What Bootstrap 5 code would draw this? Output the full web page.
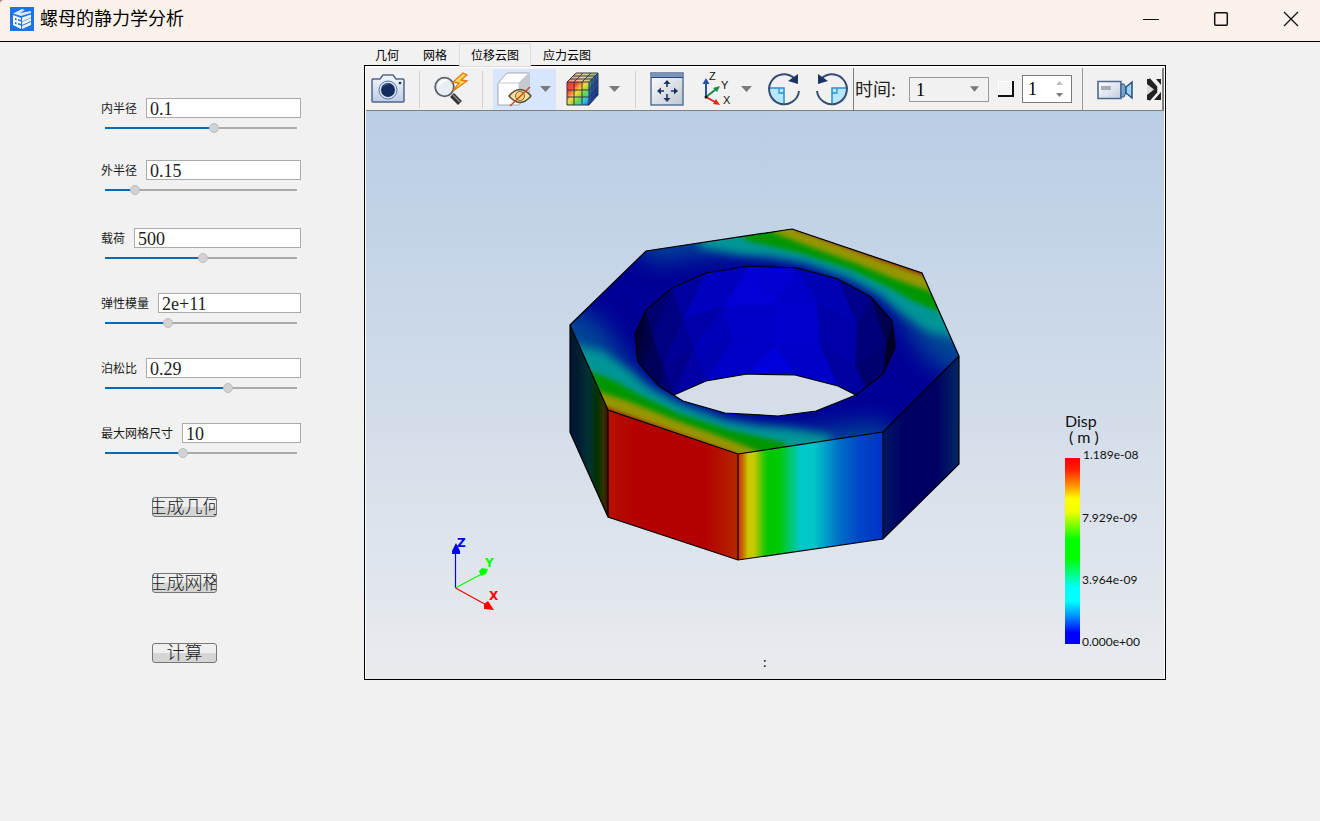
<!DOCTYPE html>
<html lang="zh-CN">
<head>
<meta charset="utf-8">
<meta name="viewport" content="width=device-width, initial-scale=1">
<title>螺母的静力学分析</title>
<link href="https://cdn.jsdelivr.net/npm/bootstrap@5.3.0/dist/css/bootstrap.min.css" rel="stylesheet">
<style>
body{background:#f1f1f1;color:#000;font-family:"Liberation Sans","Noto Sans CJK SC",sans-serif;font-size:12px;line-height:16px}
.title-wrap{background:#8f7f78}
.title-bar{background:#faf1eb;border-bottom:1px solid #000;border-top-left-radius:4px;height:42px;padding:0 10px 4px}
.title-bar h1{font-size:18px;line-height:24px;margin-left:6px}
.win-btn{width:18px;height:18px;line-height:0}
.win-gap{gap:52px;padding-right:10px}
.plain-btn{background:none;border:0;padding:0;display:flex;align-items:center;justify-content:center}
.side{flex:0 0 364px;padding:56px 63px 0 101px}
.field{margin-bottom:27px;height:38px}
.field-near{margin-bottom:24px}
.field-far{margin-bottom:30px}
.field-row{gap:9px;height:20px}
.field-row label{white-space:nowrap;color:#1a1a1a;padding-top:2px}
.field-row input{height:20px;border:1px solid #ababab;border-radius:0;padding:2px 3px 0;font:18px/18px "Liberation Serif",serif;min-width:0;color:#222}
.slide{appearance:none;-webkit-appearance:none;display:block;width:192px;height:12px;margin:4px 4px 0;background:linear-gradient(to right,#0a68b8 var(--v),#ababab var(--v)) center/100% 2px no-repeat}
.slide::-webkit-slider-thumb{-webkit-appearance:none;width:10px;height:10px;border-radius:50%;background:#d2d2d2;border:1px solid #bdbdbd}
.actions{padding:9px 0 0 51px}
.act{width:65px;height:20px;border:1px solid #777;border-radius:3px;background:linear-gradient(#efefef 50%,#d5d5d5 50%);padding:0;overflow:hidden;white-space:nowrap;display:flex;justify-content:center;align-items:center;font:300 18px/18px "Liberation Serif","Noto Sans CJK SC",serif;color:#222}
.act-far{margin-bottom:56px}
.act-near{margin-bottom:50px}
.stage{min-width:0;padding-right:154px}
.tab-row{height:24px;padding-top:1px;position:relative;z-index:1}
.tab-row .nav-link{color:#000;padding:5px 12px 3px;height:24px;border:0;border-radius:0;line-height:16px}
.tab-row .nav-link:first-child{padding-left:11px}
.tab-row .nav-link.active{background:#f1f1f1;color:#000;box-shadow:inset 0 0 0 1px #dedede}
.viewer{border:1px solid #000;background:#fff;padding:0 1px 0 1px;margin-top:-1px}
.tools{height:45px;background:#f1f1f1;border-bottom:1px solid #808080;border-top:2px solid #fafafa;padding-left:4px;overflow:hidden}
.tool{width:36px;height:40px;flex:none}
.tool-menu{width:63px;height:40px;flex:none;padding-left:3px;justify-content:flex-start}
.tool-on{background:#d8e6fd;height:41px}
.caret{width:11px;height:6px;margin-left:8px;background:#7b7b7b;clip-path:polygon(0 0,100% 0,50% 100%)}
.rule{width:1px;height:37px;background:#d0d0d0;flex:none;margin:0 13px}
.rule-end{margin-right:10px}
.rule-start{margin-left:10px}
.rule-dark{height:44px;background:#808080;margin:0 1px 0 3px}
.gap-s{margin-left:6px}
.gap-m{margin-left:9px}
.gap-l{margin-left:12px}
.serif-18{font:18px/24px "Liberation Serif","Noto Sans CJK SC",serif}
.time-label{width:54px;color:#222;white-space:nowrap;padding-top:2px}
.time-select{--bs-form-select-bg-img:url("data:image/svg+xml,%3Csvg xmlns='http://www.w3.org/2000/svg' viewBox='0 0 10 6'%3E%3Cpath d='M0 0h10l-5 6z' fill='%23777'/%3E%3C/svg%3E");width:80px;height:25px;padding:0 6px;border:1px solid #999;border-radius:0;background-color:#f1f1f1;background-size:9px 6px;background-position:right 9px top 8px;flex:none;color:#000}
.tick{appearance:none;width:16px;height:16px;background:#f4f4f4;border:solid #111;border-width:0 2px 2px 0;box-shadow:inset 1px 1px #fff;margin:0 8px 0 9px;flex:none}
.spin{width:50px;height:28px;border:1px solid #7b7b7b;background:#fff;flex:none;padding:0 8px 0 5px}
.spin input{border:0;width:26px;padding:0;appearance:textfield;-moz-appearance:textfield;outline:0}
.spin input::-webkit-inner-spin-button{display:none}
.spin .caret{width:7px;height:4px;margin:0}
.up{transform:rotate(180deg);opacity:.5}
.film{height:44px;border:solid;border-width:1px 2px 1px 0;border-color:#fff #808080 #808080;padding-left:4px;flex:1 0 70px;overflow:hidden}
.film-rule{height:44px;background:#999;margin:0 10px}
.film .tool:last-child{width:16px;margin-left:auto}
.scene{display:block;width:100%;height:auto}
.scene text{font-family:Lato,"Noto Sans",sans-serif;fill:#111}
.scene .axis-name{font:700 12px "DejaVu Sans",sans-serif}
</style>
</head>
<body>
<div class="title-wrap">
<header class="title-bar d-flex align-items-center">
  <svg width="24" height="24" viewBox="0 0 24 24" aria-hidden="true"><path fill="#1974e8" d="M0 0h24v24H0z"/><path d="M3 6.500 12 2l3 1-5 3 11-2v2l-10 3z" fill="#dbe6f5"/><path d="M3 8l8 3v11l-8-4z" fill="#f5f5f5"/><path d="M12 10.500l9-3v3l-9 4zM12 15l9-4v3l-9 4zM12 19l9-4v3l-9 4z" fill="#f0f0f0"/><path d="m5 11 1.500.6v2L5 13zm0 4 1.500.6v2L5 17zm3-3 3 1v1.500l-3-1zm0 4 3 1v1.500l-3-1z" fill="#1974e8"/></svg>
  <h1 class="mb-0 fw-normal me-auto">螺母的静力学分析</h1>
  <div class="d-flex win-gap">
    <button class="plain-btn win-btn" aria-label="最小化"><svg width="18" height="18"><path d="M1 9.500h16" stroke="#111"/></svg></button>
    <button class="plain-btn win-btn" aria-label="最大化"><svg width="18" height="18"><rect x="2.700" y="2.700" width="12.600" height="12.600" rx="1" fill="none" stroke="#111" stroke-width="1.500"/></svg></button>
    <button class="plain-btn win-btn" aria-label="关闭"><svg width="18" height="18"><path d="m2 2 14 14M16 2 2 16" stroke="#111" stroke-width="1.300"/></svg></button>
  </div>
</header>
</div>
<main class="d-flex">
  <aside class="side">
    <div class="field field-near"><div class="field-row d-flex align-items-center"><label for="ri">内半径</label><input class="form-control" id="ri" value="0.1"></div><input type="range" class="slide" value="57" aria-label="内半径" style="--v:57%"></div>
    <div class="field field-far"><div class="field-row d-flex align-items-center"><label for="ro">外半径</label><input class="form-control" id="ro" value="0.15"></div><input type="range" class="slide" value="14" aria-label="外半径" style="--v:14%"></div>
    <div class="field"><div class="field-row d-flex align-items-center"><label for="ld">载荷</label><input class="form-control" id="ld" value="500"></div><input type="range" class="slide" value="51" aria-label="载荷" style="--v:51%"></div>
    <div class="field"><div class="field-row d-flex align-items-center"><label for="em">弹性模量</label><input class="form-control" id="em" value="2e+11"></div><input type="range" class="slide" value="32" aria-label="弹性模量" style="--v:32%"></div>
    <div class="field"><div class="field-row d-flex align-items-center"><label for="nu">泊松比</label><input class="form-control" id="nu" value="0.29"></div><input type="range" class="slide" value="65" aria-label="泊松比" style="--v:65%"></div>
    <div class="field"><div class="field-row d-flex align-items-center"><label for="ms">最大网格尺寸</label><input class="form-control" id="ms" value="10"></div><input type="range" class="slide" value="40" aria-label="最大网格尺寸" style="--v:40%"></div>
    <div class="actions">
      <button class="act act-far">生成几何</button>
      <button class="act act-near">生成网格</button>
      <button class="act">计算</button>
    </div>
  </aside>
  <section class="stage flex-grow-1">
    <nav class="nav tab-row">
      <a class="nav-link" href="#">几何</a><a class="nav-link" href="#">网格</a><a class="nav-link active" aria-current="page" href="#">位移云图</a><a class="nav-link" href="#">应力云图</a>
    </nav>
    <div class="viewer">
      <div class="tools d-flex align-items-center">
        <button class="plain-btn tool" aria-label="截图"><svg width="36" height="36" viewBox="0 0 36 36"><defs><linearGradient id="cam" y2="1" x2="0"><stop stop-color="#f4f7fc"/><stop offset="1" stop-color="#bccbe2"/></linearGradient></defs><path d="M2 8h8l3-4h10l3 4h7q1 0 1 1v21q0 1-1 1H3q-1 0-1-1V9q0-1 1-1z" fill="url(#cam)" stroke="#4d678f" stroke-width="1.500"/><circle cx="18" cy="19" r="9" fill="#d9e4f3" stroke="#5c789f"/><circle cx="18" cy="19" r="7" fill="#142c5c"/><path d="M13 17q2-5 7-4-5 0-7 4" fill="#7891ba"/><circle cx="30" cy="12" r="1.300" fill="#234"/></svg></button>
        <span class="rule"></span>
        <button class="plain-btn tool" aria-label="快速缩放"><svg width="36" height="36" viewBox="0 0 36 36"><path d="m19 24 8 8" stroke="#333" stroke-width="5.500"/><path d="m20 24 7 7" stroke="#888" stroke-width="1.500"/><circle cx="11.500" cy="16" r="9.300" fill="#e8eef3" stroke="#59616a" stroke-width="1.800"/><path d="M6 15q2-6 8-6" stroke="#fff" stroke-width="2" fill="none"/><path d="m30 2-10 9 6 1-6 8 14-10-6-1 6-5z" fill="#ffd75a" stroke="#e47a16" stroke-width="1.300"/></svg></button>
        <span class="rule rule-end"></span>
        <button class="plain-btn tool-menu tool-on" aria-label="显示隐藏"><svg width="36" height="36" viewBox="0 0 36 36"><path d="m2 12 9-10h22v21L23 34H2z" fill="#fff" stroke="#a4a8ad"/><path d="M23 12 33 2v21L23 34z" fill="#c5cad0"/><path d="M2 12h21V34M23 12 33 2" fill="none" stroke="#c4c8cd"/><path d="M13 25q11-13 22 0-11 13-22 0z" fill="#f7df9d" stroke="#57502f" stroke-width="1.400"/><circle cx="24" cy="25" r="4.500" fill="#f4d27b" stroke="#77663a"/><path d="M14 35 34 16" stroke="#c94a2b" stroke-width="1.500"/></svg><span class="caret"></span></button>
        <button class="plain-btn tool-menu gap-s" aria-label="云图样式"><svg width="36" height="36" viewBox="0 0 36 36"><defs><linearGradient id="cb" x2="1" y2="1"><stop stop-color="#e33"/><stop offset=".25" stop-color="#f44b2d"/><stop offset=".45" stop-color="#fad936"/><stop offset=".65" stop-color="#68d84b"/><stop offset=".82" stop-color="#30c4dc"/><stop offset="1" stop-color="#2549df"/></linearGradient><linearGradient id="cs" y2="1" x2=".7"><stop stop-color="#78bf48"/><stop offset=".4" stop-color="#2669b2"/><stop offset="1" stop-color="#0921a4"/></linearGradient><linearGradient id="ct" x2="1"><stop stop-color="#f49386"/><stop offset=".5" stop-color="#e6d68f"/><stop offset="1" stop-color="#91bb6f"/></linearGradient></defs><path d="M2 11h22v23H2z" fill="url(#cb)"/><path d="m2 11 9-9h22l-9 9z" fill="url(#ct)"/><path d="m24 11 9-9v22l-9 10z" fill="url(#cs)"/><path d="M2 11h22v23H2zl9-9h22l-9 9m9-9v22l-9 10M9 11v23M17 11v23M2 19h22l9-10M2 26h22l9-10M9 11l9-9M17 11l9-9M5 8h22v22M8 5h22v22" fill="none" stroke="#33364b"/></svg><span class="caret"></span></button>
        <span class="rule rule-start"></span>
        <button class="plain-btn tool" aria-label="适应窗口"><svg width="36" height="36" viewBox="0 0 36 36"><defs><linearGradient id="ft" x2="1" y2="1"><stop stop-color="#fff"/><stop offset="1" stop-color="#bdc6d1"/></linearGradient></defs><path d="M2 2h32v32h-32z" fill="url(#ft)" stroke="#5a7198" stroke-width="1.500"/><path d="M2 3h31v3H2z" fill="#7895bd"/><path d="M2 6.500h32" stroke="#2d4976"/><path d="M18 11v5m0 7v5M10 20h5m7 0h5" stroke="#1b355f" stroke-width="1.600"/><path d="m18 9 3.500 4h-7zm0 22 3.500-4h-7zM8 20l4-3.500v7zm21 0-4-3.500v7z" fill="#1b355f"/></svg></button>
        <button class="plain-btn tool-menu gap-m" aria-label="视角"><svg width="36" height="36" viewBox="0 0 36 36"><path d="M9 26V12" stroke="#2452ac" stroke-width="2"/><path d="m9 7 3.500 6h-7z" fill="#2452ac"/><path d="m9 26 9-7" stroke="#168a42" stroke-width="2"/><path d="m23 15-3 6-4-4z" fill="#168a42"/><path d="m9 26 9 5" stroke="#e82318" stroke-width="2"/><path d="m23 34-7-1 3-5z" fill="#e82318"/><circle cx="9" cy="26" r="1.500" fill="#111"/><g font-family="Liberation Sans" font-size="11" fill="#111"><text x="12" y="9">Z</text><text x="24" y="18">Y</text><text x="26" y="33">X</text></g></svg><span class="caret"></span></button>
        <button class="plain-btn tool gap-m" aria-label="顺时针旋转"><svg width="36" height="36" viewBox="0 0 36 36"><path d="M3 17h15v15Q4 31 3 17z" fill="#b8e7fc"/><path d="M3 17h15v15" fill="none" stroke="#2293cf" stroke-width="1.500"/><path d="M13 17v5h5" fill="none" stroke="#2293cf" stroke-width="1.300"/><path d="M28 7A15 15 0 1 0 33 20" fill="none" stroke="#344c76" stroke-width="2"/><path d="m32 3 0 10-10-3z" fill="#1b3464"/></svg></button>
        <button class="plain-btn tool gap-l" aria-label="逆时针旋转"><svg width="36" height="36" viewBox="0 0 36 36"><path d="M33 17H18v15Q32 31 33 17z" fill="#b8e7fc"/><path d="M33 17H18v15" fill="none" stroke="#2293cf" stroke-width="1.500"/><path d="M23 17v5h-5" fill="none" stroke="#2293cf" stroke-width="1.300"/><path d="M8 7A15 15 0 1 1 3 20" fill="none" stroke="#344c76" stroke-width="2"/><path d="M4 3 4 13l10-3z" fill="#1b3464"/></svg></button>
        <span class="rule rule-dark"></span>
        <label class="time-label serif-18" for="tm">时间:</label>
        <select id="tm" class="form-select time-select serif-18"><option>1</option></select>
        <input type="checkbox" class="tick" aria-label="循环">
        <div class="spin d-flex align-items-center justify-content-between"><input type="number" class="serif-18" value="1" aria-label="步长"><div class="d-flex flex-column gap-2"><button class="plain-btn caret up" aria-label="增加"></button><button class="plain-btn caret" aria-label="减少"></button></div></div>
        <span class="rule film-rule"></span>
        <div class="film d-flex align-items-center">
          <button class="plain-btn tool" aria-label="录像"><svg width="36" height="36" viewBox="0 0 36 36"><defs><linearGradient id="vd" y2="1" x2="1"><stop stop-color="#fff"/><stop offset="1" stop-color="#c3cedf"/></linearGradient></defs><path d="M1 10.500h23v17H1z" fill="url(#vd)" stroke="#50688f" stroke-width="1.600"/><path d="M4 15h10v4H4z" fill="#a7adb7"/><path d="M24 13h3l3 6-3 7h-3z" fill="#72a6d0" stroke="#34587f"/><path d="M35 11v16l-6-5v-6z" fill="#9fd3f1" stroke="#244f7e" stroke-width="1.500"/></svg></button>
          <button class="plain-btn tool" aria-label="更多"><svg width="16" height="24" viewBox="0 0 16 24"><path fill="#222" d="M1 2h14v21H1z"/><path d="M3 2q3 5 7 8v5q-4 3-7 8h5l7-8V8L10 2z" fill="#f1f1f1"/><path d="m1 7 7 5.500L1 18z" fill="#ddd"/><path d="M3 2 10 10v5l-7 8" fill="none" stroke="#222" stroke-width="2.500"/></svg></button>
        </div>
      </div>
      <svg class="scene" viewBox="366 111 798 568" role="img" aria-label="螺母位移云图">
        <defs>
          <linearGradient id="sky" x2="0" y2="1"><stop stop-color="#b9cde5"/><stop offset="1" stop-color="#e9ebee"/></linearGradient>
          <linearGradient id="front" x2="1"><stop stop-color="#c83200"/><stop offset=".03" stop-color="#c86400"/><stop offset=".07" stop-color="#c8c800"/><stop offset=".11" stop-color="#c8c800"/><stop offset=".18" stop-color="#28c800"/><stop offset=".21" stop-color="#00c800"/><stop offset=".28" stop-color="#00c800"/><stop offset=".43" stop-color="#00c8c8"/><stop offset=".52" stop-color="#00c8c8"/><stop offset=".7" stop-color="#006ec8"/><stop offset=".84" stop-color="#0046c8"/><stop offset="1" stop-color="#0032c8"/></linearGradient>
          <linearGradient id="right" x2="1"><stop stop-color="#001664"/><stop offset=".3" stop-color="#000064"/><stop offset=".7" stop-color="#000064"/><stop offset="1" stop-color="#002864"/></linearGradient>
          <linearGradient id="left" x2="1"><stop stop-color="#001432"/><stop offset=".25" stop-color="#002032"/><stop offset=".5" stop-color="#003232"/><stop offset=".72" stop-color="#003200"/><stop offset=".87" stop-color="#323200"/><stop offset="1" stop-color="#461000"/></linearGradient>
          <linearGradient id="red" x2="1"><stop stop-color="#b41200"/><stop offset=".2" stop-color="#b40000"/><stop offset=".75" stop-color="#b40000"/><stop offset="1" stop-color="#b42800"/></linearGradient>
          <linearGradient id="ramp" x2="0" y2="1"><stop stop-color="#f00"/><stop offset=".06" stop-color="#ff1e00"/><stop offset=".15" stop-color="#ff9600"/><stop offset=".22" stop-color="#ff0"/><stop offset=".29" stop-color="#f0ff00"/><stop offset=".44" stop-color="#0f0"/><stop offset=".54" stop-color="#0f0"/><stop offset=".7" stop-color="#0ff"/><stop offset=".77" stop-color="#0ff"/><stop offset=".86" stop-color="#0082ff"/><stop offset=".94" stop-color="#00f"/><stop offset="1" stop-color="#00f"/></linearGradient>
          <filter id="b7" x="-30%" y="-30%" width="160%" height="160%"><feGaussianBlur stdDeviation="12"/></filter>
          <filter id="b4" x="-30%" y="-30%" width="160%" height="160%"><feGaussianBlur stdDeviation="5"/></filter>
          <filter id="b2" x="-30%" y="-30%" width="160%" height="160%"><feGaussianBlur stdDeviation="2.500"/></filter>
          <clipPath id="topClip"><path d="M792 229 922 273 959 356 883 432 738 454 608 410 570 325 646 251z"/></clipPath>
          <g id="bands">
            <path d="M620 225 650 262 740 250 800 256 850 274 885 296 905 325 930 362 980 385 980 200z" fill="#004696" filter="url(#b7)"/>
            <path d="M705 225 698 247 740 255 770 257 805 263 850 279 880 295 900 312 928 332 975 342 980 200z" fill="#009696" filter="url(#b4)"/>
            <path d="M746 220 744 240 770 246 800 253 850 269 890 288 915 302 960 320 980 200z" fill="#009600" filter="url(#b2)"/>
            <path d="M768 220 772 232 800 243 855 263 900 281 950 298 980 200z" fill="#969600" filter="url(#b2)"/>
            <path d="M790 210 794 228 860 252 924 275 980 290 980 200z" fill="#960a00" filter="url(#b2)"/>
          </g>
        </defs>
        <path d="M366 111h798v568H366z" fill="url(#sky)"/>
        <g clip-path="url(#topClip)"><path d="M560 220h410v240H560z" fill="#000096"/><use href="#bands"/><use href="#bands" transform="rotate(180 765 341.500)"/></g>
        <g id="bore">
          <path d="M635 334 646 310 672 288 706 273 750 266 797 268 838 279 871 297 892 321 895 347 883 374 856 395 838 386 795 375 747 374 706 381 674 395 659 386 638 362z" fill="#0000b4"/>
          <path d="M646 310 635 334 638 362 659 386 663 366 653 337z" fill="#000046"/>
          <path d="M646 310 638 362 635 334z" fill="#000032"/>
          <path d="M646 310 672 288 653 337z" fill="#00006e"/>
          <path d="M672 288 683 319 663 366 653 337z" fill="#000082"/>
          <path d="M653 337 663 366 659 386 643 366z" fill="#00005a"/>
          <path d="M663 366 659 386 674 395z" fill="#00006e"/>
          <path d="M683 319 694 348 663 366z" fill="#000096"/>
          <path d="M663 366 694 348 674 395z" fill="#00008c"/>
          <path d="M672 288 706 273 683 319z" fill="#0000a0"/>
          <path d="M706 273 750 266 724 306 683 319z" fill="#0000be"/>
          <path d="M683 319 724 306 694 348z" fill="#0000aa"/>
          <path d="M724 306 733 342 694 348z" fill="#0000b9"/>
          <path d="M694 348 733 342 706 381 674 395z" fill="#0000b4"/>
          <path d="M694 348 706 381 674 395z" fill="#0000a5"/>
          <path d="M750 266 775 305 724 306z" fill="#0000d7"/>
          <path d="M724 306 775 305 776 346 733 342z" fill="#0000c8"/>
          <path d="M733 342 776 346 747 374 706 381z" fill="#0000c8"/>
          <path d="M750 266 797 268 775 305z" fill="#0000d2"/>
          <path d="M797 268 817 302 775 305z" fill="#0000c8"/>
          <path d="M775 305 817 302 819 343 776 346z" fill="#0000cd"/>
          <path d="M776 346 797 375 747 374z" fill="#0000dc"/>
          <path d="M776 346 819 343 838 386 795 375z" fill="#0000c8"/>
          <path d="M797 268 838 279 857 325 817 302z" fill="#0000b4"/>
          <path d="M817 302 857 325 855 365 819 343z" fill="#0000aa"/>
          <path d="M819 343 855 365 865 387 856 395 838 386z" fill="#0000a0"/>
          <path d="M838 279 871 297 857 325z" fill="#00008c"/>
          <path d="M871 297 886 345 855 365 857 325z" fill="#000078"/>
          <path d="M855 365 886 345 883 374 865 387z" fill="#00006e"/>
          <path d="M871 297 892 321 886 345z" fill="#000050"/>
          <path d="M892 321 895 347 883 374 886 345z" fill="#000028"/>
          <path d="M674 395 706 381 747 374 795 375 838 386 856 395 816 411 778 416 725 413 683 401z" fill="#d4dee9"/>
        </g>
        <path d="M570 325 608 410V517L570 432z" fill="url(#left)"/>
        <path d="M608 410 738 454V560L608 517z" fill="url(#red)"/>
        <path d="M738 454 883 432V539L738 560z" fill="url(#front)"/>
        <path d="M883 432 959 356V464L883 539z" fill="url(#right)"/>
        <g fill="none" stroke="#000" stroke-width="1.200">
          <path d="M792 229 922 273 959 356 883 432 738 454 608 410 570 325 646 251zM570 325V432L608 517 738 560 883 539 959 464V356M608 410V517M738 454V560M883 432V539"/>
          <path d="M674 395 706 381 747 374 795 375 838 386 856 395 883 374 895 347 892 321 871 297 838 279 797 268 750 266 706 273 672 288 646 310 635 334 638 362 659 386 683 401 725 413 778 416 816 411 856 395"/>
        </g>
        <g stroke-width="1.200"><path d="M455.500 588V552" stroke="#00f"/><path d="m455.500 588 26-14" stroke="#0f0"/><path d="m455.500 588 31 17" stroke="#f00"/></g>
        <path d="m456 543 4 8v3h-8v-3z" fill="#00f"/><path d="M488 569 486 574 481 576 479 571 482 568z" fill="#0f0"/><path d="m494 610-10-1v-5l4-3z" fill="#f00"/>
        <text class="axis-name" x="457" y="547" style="fill:#00f">Z</text><text class="axis-name" x="485" y="567" style="fill:#0f0">Y</text><text class="axis-name" x="489" y="600" style="fill:#f00">X</text>
        <text x="1065" y="427" font-size="16">Disp</text><text x="1069" y="443" font-size="16">( m )</text>
        <path d="M1065 458h15v186h-15z" fill="url(#ramp)"/>
        <g font-size="12"><text x="1083" y="459">1.189e-08</text><text x="1082" y="522">7.929e-09</text><text x="1082" y="584">3.964e-09</text><text x="1082" y="646">0.000e+00</text></g>
        <text x="763" y="667" font-size="14">:</text>
      </svg>
    </div>
  </section>
</main>
<script src="https://cdn.jsdelivr.net/npm/bootstrap@5.3.0/dist/js/bootstrap.bundle.min.js"></script>
</body>
</html>
